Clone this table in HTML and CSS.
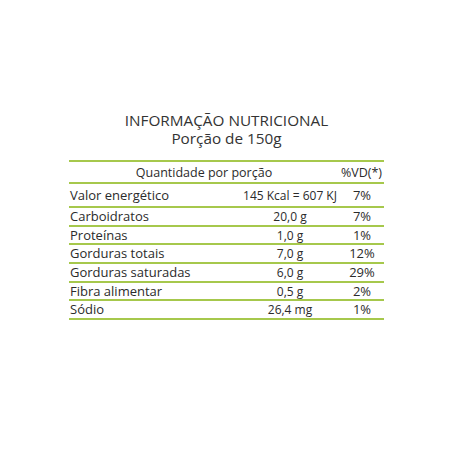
FILE: index.html
```
<!DOCTYPE html>
<html lang="pt-BR">
<head>
    <meta charset="UTF-8">
    <meta name="viewport" content="width=device-width, initial-scale=1.0">
    <title>Informação Nutricional</title>
    <link rel="stylesheet" href="styles.css">
</head>
<body>

<div class="nutri">
    <h1 class="nutri-title">INFORMAÇÃO NUTRICIONAL<br>Porção de 150g</h1>

    <table class="nutri-table">
        <thead>
            <tr>
                <th colspan="2">Quantidade por porção</th>
                <th class="col-vd">%VD(*)</th>
            </tr>
        </thead>
        <tbody>
            <tr class="first">
                <td>Valor energético</td>
                <td class="col-qty">145 Kcal = 607 KJ</td>
                <td class="col-vd">7%</td>
            </tr>
            <tr>
                <td>Carboidratos</td>
                <td class="col-qty">20,0 g</td>
                <td class="col-vd">7%</td>
            </tr>
            <tr>
                <td>Proteínas</td>
                <td class="col-qty">1,0 g</td>
                <td class="col-vd">1%</td>
            </tr>
            <tr>
                <td>Gorduras totais</td>
                <td class="col-qty">7,0 g</td>
                <td class="col-vd">12%</td>
            </tr>
            <tr>
                <td>Gorduras saturadas</td>
                <td class="col-qty">6,0 g</td>
                <td class="col-vd">29%</td>
            </tr>
            <tr>
                <td>Fibra alimentar</td>
                <td class="col-qty">0,5 g</td>
                <td class="col-vd">2%</td>
            </tr>
            <tr>
                <td>Sódio</td>
                <td class="col-qty">26,4 mg</td>
                <td class="col-vd">1%</td>
            </tr>
        </tbody>
    </table>
</div>

</body>
</html>
```

FILE: styles.css
```
body {
    margin: 0;
    padding: 0;
    background-color: #ffffff;
    font-family: "Open Sans", "DejaVu Sans", sans-serif;
    color: #2b2b2b;
}
.nutri {
    width: 315px;
    margin: 0 auto;
    padding-top: 111px;
}
.nutri-title {
    margin: 0 0 13px;
    font-size: 15.3px;
    font-weight: 400;
    line-height: 18px;
    text-align: center;
    color: #333333;
}
.nutri-table {
    width: 100%;
    border-collapse: collapse;
    border-top: 2px solid #a6c84c;
    font-size: 13px;
    line-height: 15px;
}
.nutri-table th,
.nutri-table td {
    padding: 0;
    border-bottom: 2px solid #a6c84c;
    font-weight: 500;
    white-space: nowrap;
}
.nutri-table th {
    height: 20px;
    font-size: 12.5px;
    text-align: center;
}
.nutri-table td {
    height: 16.7px;
    padding-left: 1px;
    text-align: left;
}
.nutri-table tr.first td {
    height: 22px;
}
.nutri-table .col-qty {
    width: 98px;
    font-size: 12px;
    text-align: center;
}
.nutri-table .col-vd {
    width: 44px;
    text-align: center;
}
```
